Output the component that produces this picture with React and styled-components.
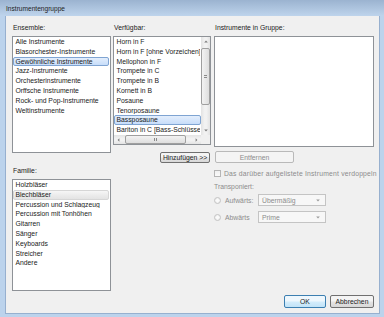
import React from 'react';
import styled, { createGlobalStyle } from 'styled-components';

const ROW = 9.8;

const GlobalStyle = createGlobalStyle`
  html, body { margin: 0; padding: 0; }
  body {
    width: 384px;
    height: 317px;
    overflow: hidden;
    font-family: "Liberation Sans", Arial, sans-serif;
    font-size: 6.8px;
    color: #1b1b1b;
  }
`;

const Window = styled.div`
  width: 384px;
  height: 317px;
  display: flex;
  flex-direction: column;
  background: #bcd3ec;
`;

const TitleBar = styled.div`
  height: 16px;
  flex-shrink: 0;
  display: flex;
  align-items: center;
  padding-left: 6px;
  background: linear-gradient(#9bb3d0, #bed4ec);
  color: #1e1e1e;
  font-size: 6.6px;
`;

const Frame = styled.div`
  flex: 1;
  display: flex;
  padding: 0 4px 3px 5px;
  min-height: 0;
`;

const Content = styled.div`
  flex: 1;
  display: flex;
  flex-direction: column;
  background: #f0f0f0;
  border: 1px solid #97b0cf;
  border-top: none;
  padding: 8px 5px 5px 6px;
`;

const TopArea = styled.div`
  display: flex;
  gap: 2px;
`;

const Column = styled.div`
  width: ${p => p.w}px;
  display: flex;
  flex-direction: column;
  margin-left: ${p => p.ml || 0}px;
`;

const Label = styled.div`
  height: 8px;
  line-height: 8px;
  margin-top: ${p => p.mt || 0}px;
  margin-bottom: 4px;
  padding-left: 1px;
  white-space: nowrap;
  color: ${p => (p.disabled ? '#8c8c8c' : '#1b1b1b')};
`;

const ListBox = styled.div`
  height: ${p => p.h}px;
  box-sizing: border-box;
  border: 1px solid #8e9297;
  background: #fff;
  overflow: hidden;
  display: grid;
  grid-template-columns: ${p => (p.scroll ? '1fr 9px' : '1fr')};
  grid-template-rows: ${p => (p.scroll ? '1fr 9px' : '1fr')};
`;

const Items = styled.div`
  overflow: hidden;
  min-width: 0;
`;

const Item = styled.div`
  height: ${ROW}px;
  line-height: ${ROW - 2}px;
  box-sizing: border-box;
  padding-left: 1.5px;
  margin-right: ${p => (p.full ? 0 : 1)}px;
  white-space: nowrap;
  overflow: hidden;
  border: 1px solid transparent;
  border-radius: 2px;
  ${p =>
    p.selected === 'active' &&
    `
    background: linear-gradient(#e3eefc, #c7ddfa);
    border-color: #7fa4d2;
  `}
  ${p =>
    p.selected === 'inactive' &&
    `
    background: linear-gradient(#f6f6f6, #e3e3e3);
    border-color: #d6d6d6;
  `}
`;

const VScroll = styled.div`
  grid-column: 2;
  grid-row: 1;
  display: flex;
  flex-direction: column;
  background: linear-gradient(90deg, #e3e3e3, #f2f2f2 40%, #f2f2f2 60%, #e3e3e3);
`;

const HScroll = styled.div`
  grid-column: 1;
  grid-row: 2;
  display: flex;
  background: linear-gradient(#e3e3e3, #f2f2f2 40%, #f2f2f2 60%, #e3e3e3);
`;

const Corner = styled.div`
  grid-column: 2;
  grid-row: 2;
  background: #f0f0f0;
`;

const Arrow = styled.div`
  width: 9px;
  height: 9px;
  flex-shrink: 0;
  display: flex;
  align-items: center;
  justify-content: center;
`;

const Track = styled.div`
  flex: 1;
  display: flex;
  flex-direction: ${p => (p.horizontal ? 'row' : 'column')};
`;

const Thumb = styled.div`
  box-sizing: border-box;
  border: 1px solid #9f9f9f;
  border-radius: 2px;
  display: flex;
  align-items: center;
  justify-content: center;
  ${p =>
    p.horizontal
      ? `height: 9px; width: ${p.len}px; margin-left: ${p.offset}px;
         background: linear-gradient(#f3f3f3, #dedede);`
      : `width: 9px; height: ${p.len}px; margin-top: ${p.offset}px;
         background: linear-gradient(90deg, #f3f3f3, #dedede);`}
`;

const Grip = styled.div`
  ${p =>
    p.horizontal
      ? `width: 4px; height: 3px;
         background: repeating-linear-gradient(90deg, #8a8a8a 0 1px, transparent 1px 2px);`
      : `width: 3px; height: 4px;
         background: repeating-linear-gradient(#8a8a8a 0 1px, transparent 1px 2px);`}
`;

const Button = styled.div`
  box-sizing: border-box;
  width: ${p => p.w}px;
  height: ${p => p.h}px;
  margin-top: ${p => p.mt || 0}px;
  align-self: ${p => p.align || 'auto'};
  margin-right: ${p => p.mr || 0}px;
  margin-left: ${p => p.ml || 0}px;
  display: flex;
  align-items: center;
  justify-content: center;
  white-space: nowrap;
  border-radius: 2px;
  border: 1px solid ${p => (p.disabled ? '#b9b9b9' : p.primary ? '#3c7fb1' : '#707070')};
  background: ${p =>
    p.disabled
      ? '#f4f4f4'
      : p.primary
      ? 'linear-gradient(#eef7fd 45%, #d3ecfb 55%, #c2e3f7)'
      : 'linear-gradient(#f4f4f4 45%, #e3e3e3 55%, #d8d8d8)'};
  color: ${p => (p.disabled ? '#8c8c8c' : '#1b1b1b')};
`;

const OptionRow = styled.div`
  display: flex;
  align-items: center;
  height: ${p => p.h || 8}px;
  margin-top: ${p => p.mt || 0}px;
  white-space: nowrap;
  color: #8c8c8c;
`;

const Spread = styled.span`
  letter-spacing: 0.2px;
`;

const CheckBox = styled.div`
  width: 7px;
  height: 7px;
  flex-shrink: 0;
  box-sizing: border-box;
  border: 1px solid #b5b5b5;
  background: linear-gradient(#f0f0f0, #fafafa);
  margin-right: 3px;
`;

const Radio = styled.div`
  width: 7px;
  height: 7px;
  flex-shrink: 0;
  box-sizing: border-box;
  border: 1px solid #c4c4c4;
  border-radius: 50%;
  background: radial-gradient(circle, #fafafa 30%, #e4e4e4);
  margin-right: 4px;
`;

const RadioLabel = styled.span`
  width: 33px;
  flex-shrink: 0;
`;

const Select = styled.div`
  width: 68px;
  height: 12px;
  flex-shrink: 0;
  box-sizing: border-box;
  border: 1px solid #c4c4c4;
  background: #f7f7f7;
  display: flex;
  align-items: center;
  justify-content: space-between;
  padding: 0 5px 0 3px;
  color: #8c8c8c;
`;

const Footer = styled.div`
  margin-top: auto;
  display: flex;
  justify-content: flex-end;
  gap: 4px;
`;

const Tri = ({ dir, color = '#7a7a7a' }) => {
  const pts = {
    up: '0,4 3,1 6,4',
    down: '0,1 3,4 6,1',
    left: '4,0 1,3 4,6',
    right: '1,0 4,3 1,6',
  }[dir];
  const w = dir === 'up' || dir === 'down' ? 6 : 5;
  const h = dir === 'up' || dir === 'down' ? 5 : 6;
  return (
    <svg width={w - 2} height={h - 2} viewBox={`0 0 ${w} ${h}`}>
      <polygon points={pts} fill={color} />
    </svg>
  );
};

const ensembles = [
  'Alle Instrumente',
  'Blasorchester-Instrumente',
  'Gewöhnliche Instrumente',
  'Jazz-Instrumente',
  'Orchesterinstrumente',
  'Orffsche Instrumente',
  'Rock- und Pop-Instrumente',
  'Weltinstrumente',
];

const available = [
  'Horn in F',
  'Horn in F [ohne Vorzeichen]',
  'Mellophon in F',
  'Trompete in C',
  'Trompete in B',
  'Kornett in B',
  'Posaune',
  'Tenorposaune',
  'Bassposaune',
  'Bariton in C [Bass-Schlüssel]',
];

const families = [
  'Holzbläser',
  'Blechbläser',
  'Percussion und Schlagzeug',
  'Percussion mit Tonhöhen',
  'Gitarren',
  'Sänger',
  'Keyboards',
  'Streicher',
  'Andere',
];

export default function App() {
  return (
    <>
      <GlobalStyle />
      <Window>
        <TitleBar>Instrumentengruppe</TitleBar>
        <Frame>
          <Content>
            <TopArea>
              <Column w={99}>
                <Label>Ensemble:</Label>
                <ListBox h={117}>
                  <Items>
                    {ensembles.map((e, i) => (
                      <Item key={e} selected={i === 2 ? 'active' : null}>
                        {e}
                      </Item>
                    ))}
                  </Items>
                </ListBox>
                <Label mt={14}>Familie:</Label>
                <ListBox h={112}>
                  <Items>
                    {families.map((f, i) => (
                      <Item key={f} selected={i === 1 ? 'inactive' : null}>
                        {f}
                      </Item>
                    ))}
                  </Items>
                </ListBox>
              </Column>

              <Column w={98}>
                <Label>Verfügbar:</Label>
                <ListBox h={109} scroll>
                  <Items>
                    {available.map((a, i) => (
                      <Item key={a} full selected={i === 8 ? 'active' : null}>
                        {a}
                      </Item>
                    ))}
                  </Items>
                  <VScroll>
                    <Arrow>
                      <Tri dir="up" />
                    </Arrow>
                    <Track>
                      <Thumb len={57} offset={2}>
                        <Grip />
                      </Thumb>
                    </Track>
                    <Arrow>
                      <Tri dir="down" />
                    </Arrow>
                  </VScroll>
                  <HScroll>
                    <Arrow>
                      <Tri dir="left" />
                    </Arrow>
                    <Track horizontal>
                      <Thumb horizontal len={61} offset={2}>
                        <Grip horizontal />
                      </Thumb>
                    </Track>
                    <Arrow>
                      <Tri dir="right" />
                    </Arrow>
                  </HScroll>
                  <Corner />
                </ListBox>
                <Button w={50} h={11} mt={7} mr={1} align="flex-end">
                  Hinzufügen &gt;&gt;
                </Button>
              </Column>

              <Column w={160} ml={1}>
                <Label>Instrumente in Gruppe:</Label>
                <ListBox h={111} />
                <Button w={79} h={12} mt={4} ml={1} disabled>
                  Entfernen
                </Button>
                <OptionRow mt={6}>
                  <CheckBox />
                  <Spread>Das darüber aufgelistete Instrument verdoppeln</Spread>
                </OptionRow>
                <OptionRow mt={5}>Transponiert:</OptionRow>
                <OptionRow mt={4} h={12}>
                  <Radio />
                  <RadioLabel>Aufwärts:</RadioLabel>
                  <Select>
                    Übermäßig
                    <Tri dir="down" color="#9a9a9a" />
                  </Select>
                </OptionRow>
                <OptionRow mt={5} h={12}>
                  <Radio />
                  <RadioLabel>Abwärts</RadioLabel>
                  <Select>
                    Prime
                    <Tri dir="down" color="#9a9a9a" />
                  </Select>
                </OptionRow>
              </Column>
            </TopArea>
            <Footer>
              <Button w={42} h={13} primary>
                OK
              </Button>
              <Button w={44} h={13}>
                Abbrechen
              </Button>
            </Footer>
          </Content>
        </Frame>
      </Window>
    </>
  );
}
